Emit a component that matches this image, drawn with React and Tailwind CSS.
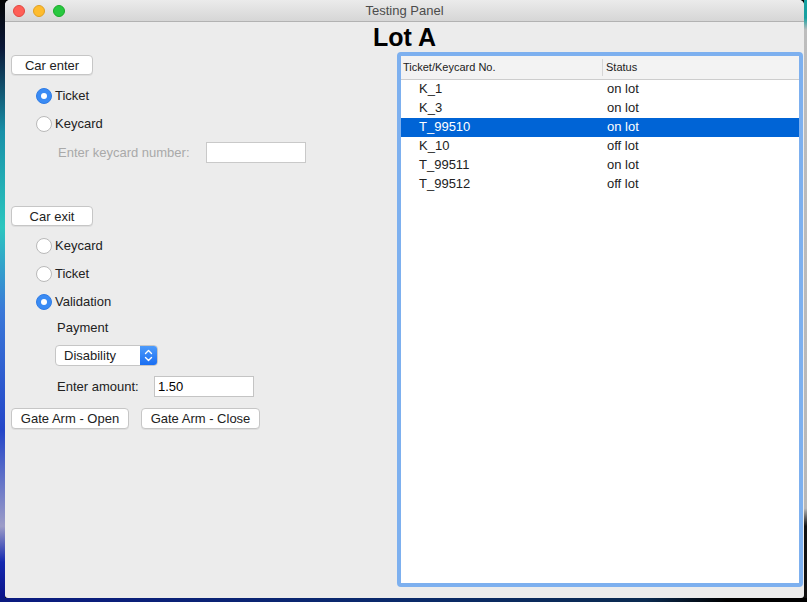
import React from "react";

const font = { fontFamily: '"Liberation Sans", Arial, sans-serif' };

function Radio({ checked, label }) {
  return (
    <div className="flex h-[28px] items-center ml-[25px]">
      {checked ? (
        <div className="flex h-[16px] w-[16px] items-center justify-center rounded-full bg-[#3a8bf4] border border-[#2f7ce6]">
          <div className="h-[6px] w-[6px] rounded-full bg-white" />
        </div>
      ) : (
        <div className="h-[16px] w-[16px] rounded-full bg-white border border-[#b9b9b9]" />
      )}
      <span className="ml-[3px] text-[13px] text-[#222]">{label}</span>
    </div>
  );
}

function Btn({ children, w }) {
  return (
    <div
      className={`flex h-[20px] items-center justify-center rounded-[4px] border border-[#c6c6c6] bg-white text-[13px] text-[#222] shadow-[0_1px_0_rgba(0,0,0,0.06)] ${w}`}
    >
      {children}
    </div>
  );
}

const rows = [
  ["K_1", "on lot"],
  ["K_3", "on lot"],
  ["T_99510", "on lot", true],
  ["K_10", "off lot"],
  ["T_99511", "on lot"],
  ["T_99512", "off lot"],
];

export default function App() {
  return (
    <div style={font} className="flex h-[602px] w-[807px] flex-col overflow-hidden bg-black">
      <div className="flex h-[598px]">
        <div className="w-[5px] bg-[linear-gradient(to_bottom,#050505_0%,#0a1838_8%,#1890a8_22%,#2cc6bf_38%,#3a78d8_52%,#2446c8_72%,#9c9cc8_88%,#1428b0_94%,#0a1488_100%)]" />
        <div className="flex w-[799px] flex-col overflow-hidden rounded-t-[5px] rounded-b-[3px] bg-[#ececec]">
          {/* title bar */}
          <div className="relative flex h-[22px] items-center justify-center border-b border-[#b2b2b2] bg-[linear-gradient(to_bottom,#ebebeb,#d6d6d6)]">
            <div className="absolute left-[8px] top-[5px] flex gap-[8px]">
              <div className="h-[12px] w-[12px] rounded-full bg-[#fe5f57] border border-[#e2463f]" />
              <div className="h-[12px] w-[12px] rounded-full bg-[#febc2e] border border-[#dfa023]" />
              <div className="h-[12px] w-[12px] rounded-full bg-[#28c840] border border-[#1aab29]" />
            </div>
            <span className="text-[13px] text-[#4c4c4c]">Testing Panel</span>
          </div>
          {/* heading */}
          <div className="h-[30px] text-center text-[25px] font-bold leading-[30px] text-black">Lot A</div>
          {/* main */}
          <div className="flex flex-1">
            <div className="flex w-[392px] flex-col pl-[6px]">
              <div className="mt-[3px]">
                <Btn w="w-[82px] pt-[1px]">Car enter</Btn>
              </div>
              <div className="mt-[7px]">
                <Radio checked label="Ticket" />
                <Radio label="Keycard" />
              </div>
              <div className="mt-[4px] flex h-[21px] items-center">
                <span className="ml-[47px] w-[148px] text-[13px] text-[#a9a9a9]">Enter keycard number:</span>
                <div className="h-[21px] w-[100px] border border-[#c9c9c9] bg-white" />
              </div>
              <div className="mt-[43px]">
                <Btn w="w-[82px] pt-[1px]">Car exit</Btn>
              </div>
              <div className="mt-[6px]">
                <Radio label="Keycard" />
                <Radio label="Ticket" />
                <Radio checked label="Validation" />
              </div>
              <div className="mt-[2px] flex h-[20px] items-center pl-[46px] text-[13px] text-[#222]">Payment</div>
              <div className="ml-[44px] mt-[7px] flex h-[21px] w-[103px] overflow-hidden rounded-[4px] border border-[#c6c6c6] bg-white">
                <span className="flex flex-1 items-center pl-[8px] text-[13px] text-[#222]">Disability</span>
                <div className="flex w-[17px] flex-col items-center justify-center bg-[linear-gradient(to_bottom,#4d9bfb,#1a6ef2)]">
                  <svg width="9" height="13" viewBox="0 0 9 13" fill="none" stroke="white" strokeWidth="1.4" strokeLinecap="round" strokeLinejoin="round">
                    <path d="M1.5 4.5 L4.5 1.5 L7.5 4.5" />
                    <path d="M1.5 8.5 L4.5 11.5 L7.5 8.5" />
                  </svg>
                </div>
              </div>
              <div className="mt-[10px] flex h-[21px] items-center">
                <span className="ml-[46px] w-[97px] text-[13px] text-[#222]">Enter amount:</span>
                <div className="flex h-[21px] w-[100px] items-center border border-[#c4c4c4] bg-white pl-[3px] text-[13px] text-black">1.50</div>
              </div>
              <div className="mt-[11px] flex gap-[12px]">
                <Btn w="w-[118px] h-[21px]">Gate Arm - Open</Btn>
                <Btn w="w-[119px] h-[21px]">Gate Arm - Close</Btn>
              </div>
            </div>
            {/* table */}
            <div className="mb-[11px] mr-[1px] flex w-[406px] flex-col rounded-[4px] border-[4px] border-[#7db0ef] bg-white">
              <div className="flex h-[24px] border-b border-[#cdcdcd] bg-[#f3f3f3] text-[11px] text-[#222]">
                <div className="flex w-[201px] items-center pl-[2px]">Ticket/Keycard No.</div>
                <div className="my-[3px] w-px bg-[#d6d6d6]" />
                <div className="flex items-center pl-[3px]">Status</div>
              </div>
              {rows.map(([a, b, sel]) => (
                <div
                  key={a}
                  className={`flex h-[19px] items-center pb-[2px] text-[13px] ${sel ? "bg-[#0064d6] text-white" : "text-[#222]"}`}
                >
                  <div className="w-[201px] pl-[18px]">{a}</div>
                  <div className="pl-[5px]">{b}</div>
                </div>
              ))}
            </div>
          </div>
        </div>
        <div className="w-[3px] bg-[linear-gradient(to_bottom,#16a0a0_0%,#16a0a0_3%,#bdbdbd_5%,#b8b8b8_85%,#111_88%,#111_100%)]" />
      </div>
      <div className="h-[4px] bg-[linear-gradient(to_right,#0a1a80,#0a2a6a_50%,#0a2a50_80%,#000_90%)]" />
    </div>
  );
}
